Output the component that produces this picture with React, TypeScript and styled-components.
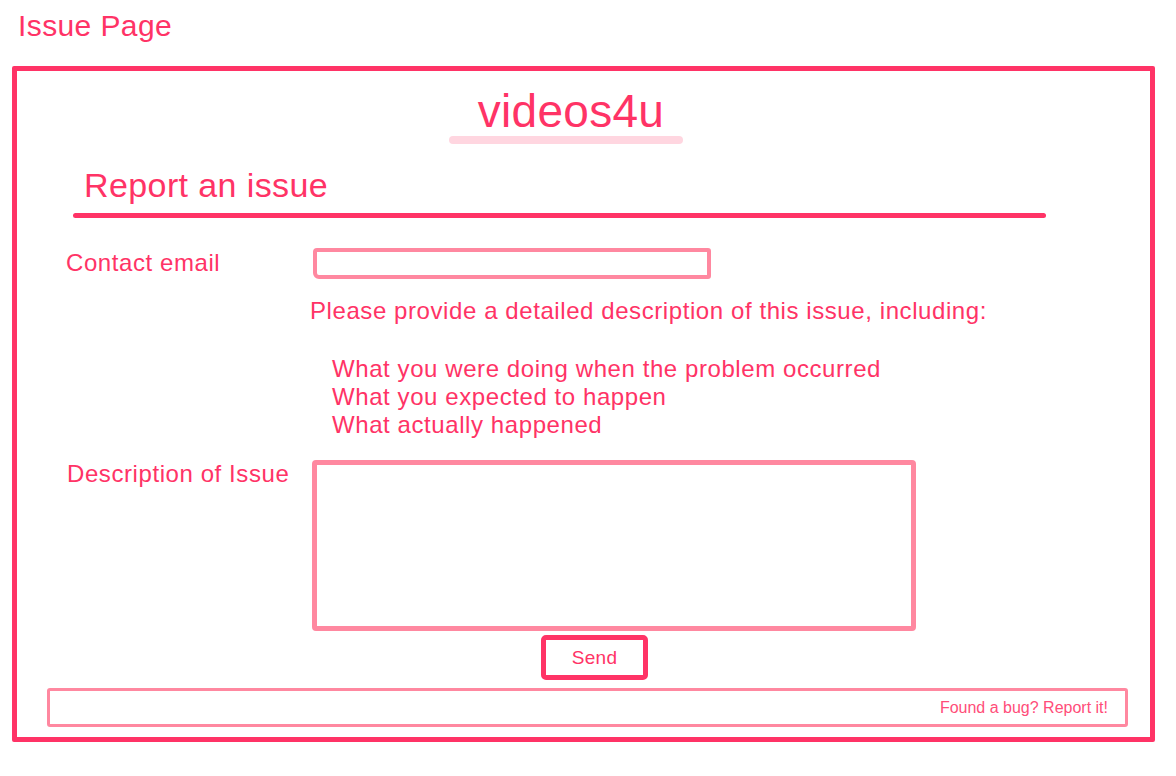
import React from 'react';
import styled, { createGlobalStyle } from 'styled-components';

const Global = createGlobalStyle`
  body {
    margin: 0;
    background: #ffffff;
    font-family: "Liberation Sans", Arial, sans-serif;
    color: #ff3366;
  }
  * { box-sizing: border-box; }
`;

const Page = styled.div`
  width: 1176px;
  height: 776px;
  padding-top: 9px;
`;

const PageTitle = styled.h1`
  margin: 0 0 0 18px;
  font-size: 30px;
  line-height: 34px;
  font-weight: 400;
  letter-spacing: 0.4px;
`;

const Frame = styled.section`
  margin: 23px 0 0 12px;
  width: 1143px;
  height: 676px;
  border: 5px solid #ff3366;
  border-radius: 2px;
  padding-top: 15px;
  display: flex;
  flex-direction: column;
`;

const Brand = styled.div`
  margin-left: 432px;
  width: 234px;
  display: flex;
  flex-direction: column;
  align-items: center;
`;

const BrandName = styled.div`
  font-size: 46px;
  line-height: 50px;
  letter-spacing: 0.3px;
  padding-left: 10px;
`;

const BrandMark = styled.div`
  width: 100%;
  height: 8px;
  border-radius: 4px;
  background: #ffd6e0;
`;

const Heading = styled.h2`
  margin: 21px 0 0 67px;
  font-size: 34px;
  line-height: 40px;
  font-weight: 400;
  letter-spacing: 0.4px;
`;

const Divider = styled.div`
  margin: 8px 0 0 56px;
  width: 973px;
  height: 5px;
  border-radius: 3px;
  background: #ff3366;
`;

const Form = styled.form`
  margin: 30px 0 0 49px;
  display: grid;
  grid-template-columns: 244px 1fr;
  align-items: start;
  font-size: 24px;
  line-height: 28px;
  letter-spacing: 0.58px;
`;

const Label = styled.label<{ $top?: number }>`
  grid-column: 1;
  margin-top: ${p => p.$top ?? 0}px;
  padding-top: 1px;
  padding-left: ${p => (p.$top ? 1 : 0)}px;
`;

const Field = styled.div<{ $top?: number }>`
  grid-column: 2;
  margin-top: ${p => p.$top ?? 0}px;
`;

const EmailInput = styled.input`
  display: block;
  margin-left: 3px;
  width: 398px;
  height: 31px;
  border: 4px solid #ff88a0;
  border-radius: 4px 3px 3px 6px;
  background: #fff;
  outline: none;
`;

const Instructions = styled.p`
  margin: 18px 0 0 0;
`;

const Steps = styled.ul`
  margin: 30px 0 0 0;
  padding-left: 22px;
  list-style: none;
`;

const DescriptionBox = styled.textarea`
  display: block;
  margin: 0 0 0 2px;
  width: 604px;
  height: 171px;
  border: 5px solid #ff88a0;
  border-radius: 4px;
  background: #fff;
  resize: none;
  outline: none;
`;

const SendButton = styled.button`
  margin: 4px 0 0 231px;
  width: 107px;
  height: 45px;
  border: 5px solid #ff3366;
  border-radius: 5px;
  background: #fff;
  color: #ff3366;
  font-family: "Liberation Sans", Arial, sans-serif;
  font-size: 19px;
  letter-spacing: 0.3px;
  padding: 0;
`;

const Footer = styled.footer`
  margin: 8px 0 0 30px;
  width: 1081px;
  height: 39px;
  border: 3px solid #ff88a0;
  border-radius: 3px;
  display: flex;
  align-items: center;
  justify-content: flex-end;
  padding-right: 17px;
  padding-top: 1px;
  font-size: 16px;
  color: #ff4d79;
`;

export default function App() {
  return (
    <Page>
      <Global />
      <PageTitle>Issue Page</PageTitle>
      <Frame>
        <Brand>
          <BrandName>videos4u</BrandName>
          <BrandMark />
        </Brand>
        <Heading>Report an issue</Heading>
        <Divider />
        <Form onSubmit={e => e.preventDefault()}>
          <Label htmlFor="email">Contact email</Label>
          <Field>
            <EmailInput id="email" type="email" />
            <Instructions>Please provide a detailed description of this issue, including:</Instructions>
            <Steps>
              <li>What you were doing when the problem occurred</li>
              <li>What you expected to happen</li>
              <li>What actually happened</li>
            </Steps>
          </Field>
          <Label htmlFor="desc" $top={20}>Description of Issue</Label>
          <Field $top={21}>
            <DescriptionBox id="desc" />
            <SendButton type="submit">Send</SendButton>
          </Field>
        </Form>
        <Footer>Found a bug? Report it!</Footer>
      </Frame>
    </Page>
  );
}
